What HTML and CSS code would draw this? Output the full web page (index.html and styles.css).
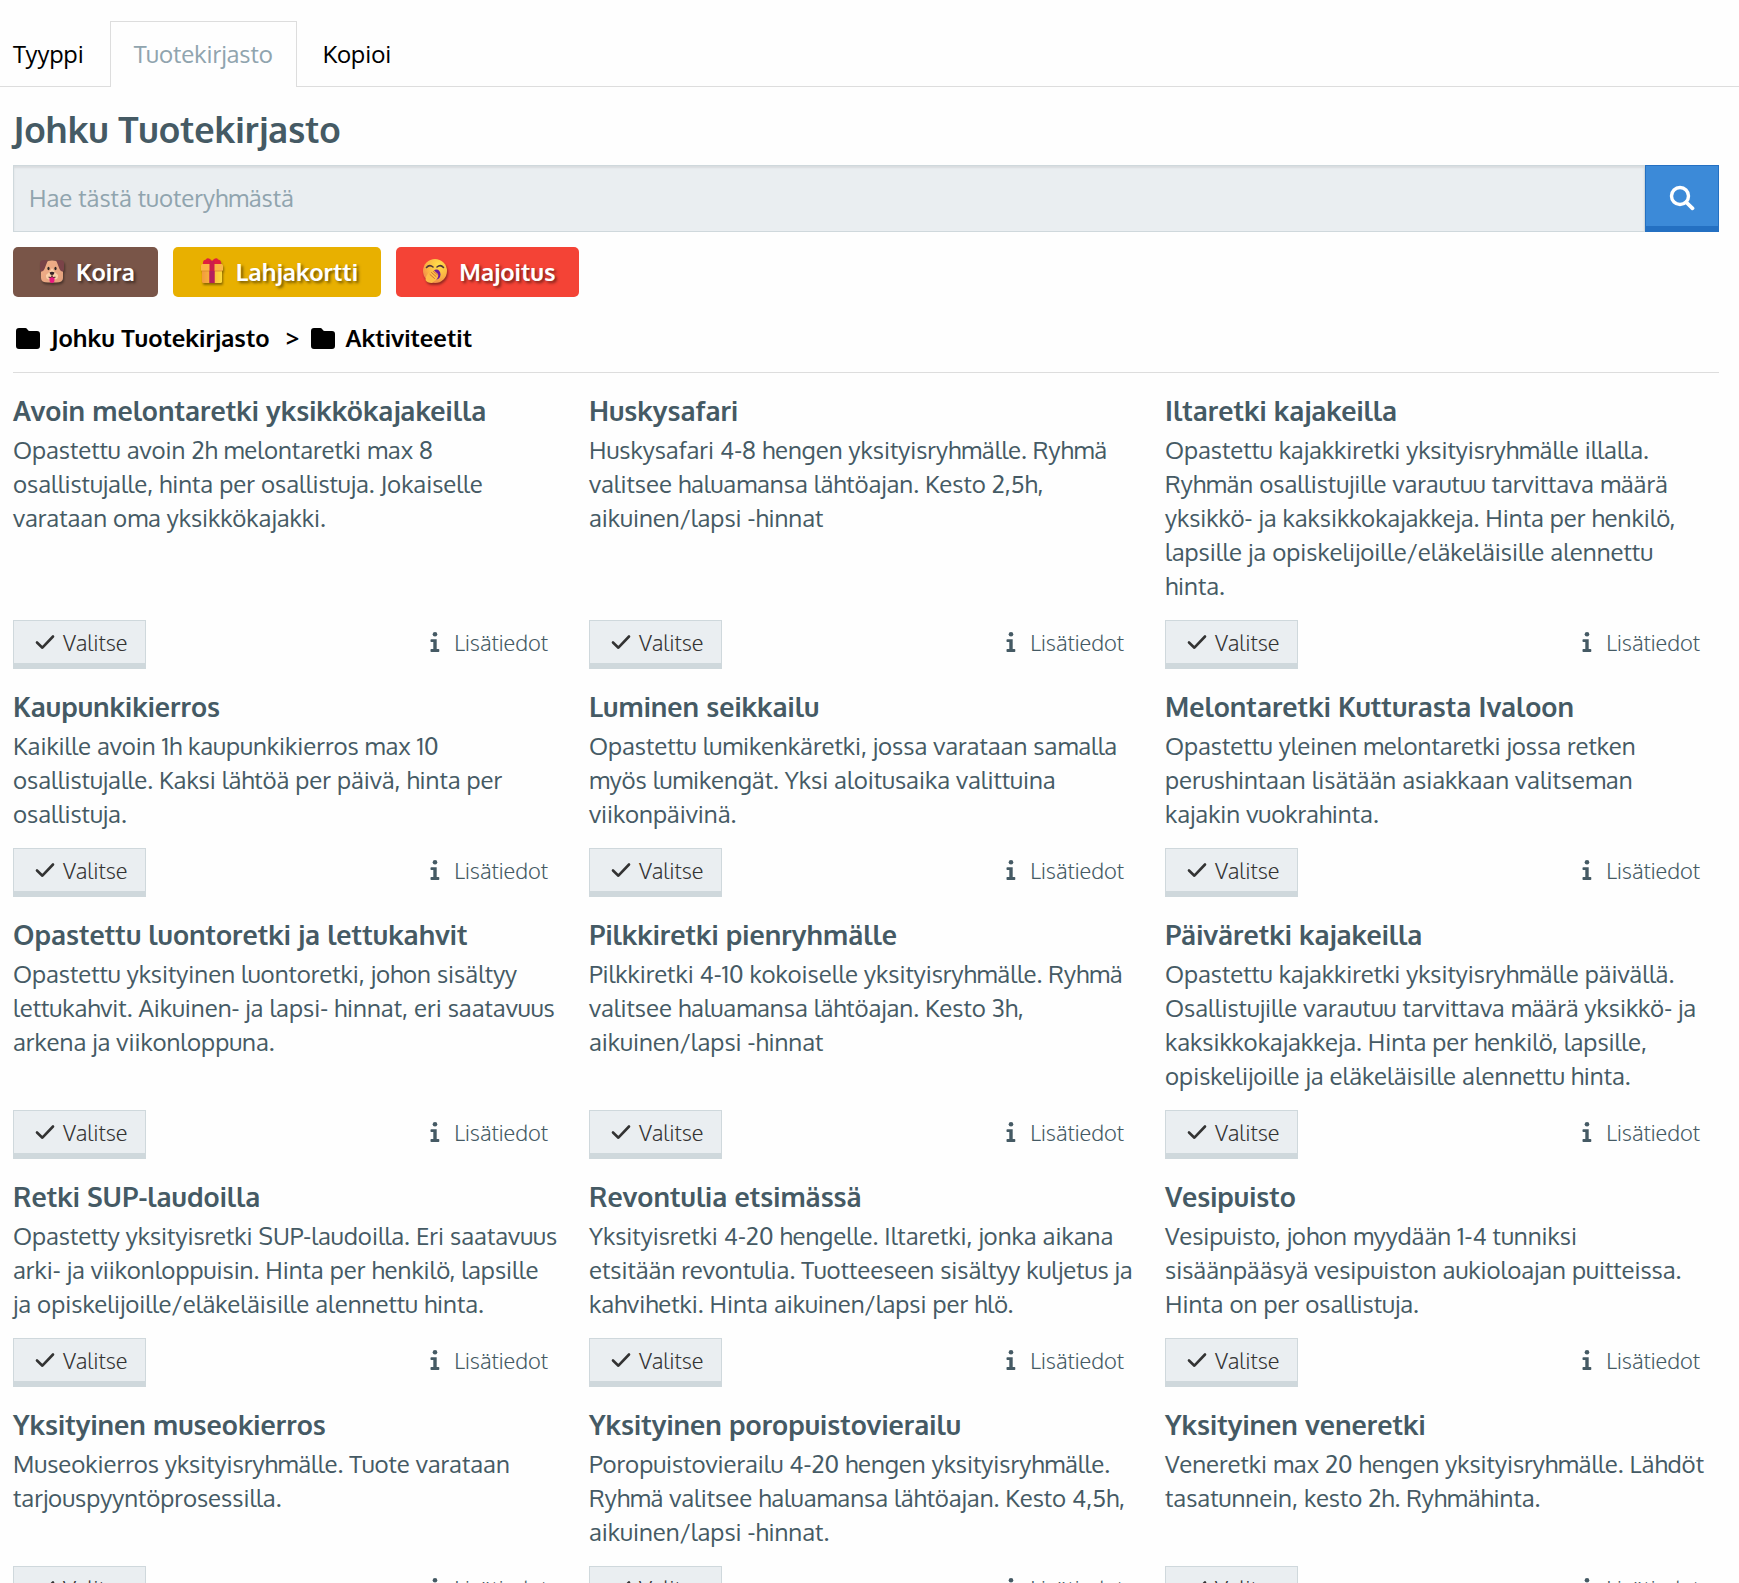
FILE: index.html
```html
<!DOCTYPE html>
<html lang="fi">
<head>
    <meta charset="UTF-8">
    <meta name="viewport" content="width=device-width, initial-scale=1.0">
    <title>Johku Tuotekirjasto</title>
    <link rel="stylesheet" href="styles.css">
</head>
<body>
    <!-- shared icons -->
    <svg class="sprite" aria-hidden="true">
        <symbol id="icon-check" viewBox="0 0 20 16">
            <path d="M2 8.5l5.4 5.2L18 2.5" fill="none" stroke="currentColor" stroke-width="2.6" stroke-linecap="round" stroke-linejoin="round"/>
        </symbol>
        <symbol id="icon-info" viewBox="0 0 10 20">
            <circle cx="5" cy="2.3" r="2.3"/>
            <path d="M1.3 7.2H6.7V17H8.5A.8.8 0 0 1 9.3 17.8V19.2A.8.8 0 0 1 8.5 20H1.3A.8.8 0 0 1 .5 19.2V17.8A.8.8 0 0 1 1.3 17H3.3V10H1.3A.8.8 0 0 1 .5 9.2V8A.8.8 0 0 1 1.3 7.2Z"/>
        </symbol>
        <symbol id="icon-folder" viewBox="0 0 24 21">
            <path d="M3 0H9.5C11.5 0 11.5 3 13.5 3H21A3 3 0 0 1 24 6V18A3 3 0 0 1 21 21H3A3 3 0 0 1 0 18V3A3 3 0 0 1 3 0Z"/>
        </symbol>
    </svg>

    <nav class="tabs">
        <a href="#" class="tab">Tyyppi</a>
        <a href="#" class="tab active">Tuotekirjasto</a>
        <a href="#" class="tab">Kopioi</a>
    </nav>

    <main class="container">
        <h1>Johku Tuotekirjasto</h1>

        <form class="search">
            <input type="text" class="search-input" placeholder="Hae tästä tuoteryhmästä" aria-label="Hae tästä tuoteryhmästä">
            <button type="submit" class="search-btn" aria-label="Hae">
                <svg width="26" height="26" viewBox="0 0 26 26" fill="none" stroke="#fff" stroke-linecap="round">
                    <circle cx="11" cy="11" r="8.5" stroke-width="3.4"/>
                    <path d="M17.5 17.5L23.5 23.3" stroke-width="3.8"/>
                </svg>
            </button>
        </form>

        <div class="tags">
            <button type="button" class="tag tag-dog">
                <svg class="emoji" viewBox="0 0 26 26">
                    <defs>
                        <linearGradient id="dogFace" x1="0" y1="0" x2="1" y2="1">
                            <stop offset="0" stop-color="#f3b08a"/>
                            <stop offset="1" stop-color="#e2a07c"/>
                        </linearGradient>
                    </defs>
                    <path d="M6 4Q13 1 20 4L24 14V20Q24 24.5 17 24.5H9Q2 24.5 2 20V14Z" fill="url(#dogFace)"/>
                    <path d="M1 5Q1 2 5 2H9Q7 7 5.500 11Q4 14 2 13.500Q1 13 1 11Z" fill="#7a4348"/>
                    <path d="M25 5Q25 2 21 2H17Q19 7 20.500 11Q22 14 24 13.500Q25 13 25 11Z" fill="#7a4348"/>
                    <path d="M13 10Q15 14 19 17Q19.5 21 16 21.5H10Q6.5 21 7 17Q11 14 13 10Z" fill="#fcd0a8"/>
                    <ellipse cx="9.5" cy="10.5" rx="1.1" ry="1.8" fill="#2f2525"/>
                    <ellipse cx="16.5" cy="10.5" rx="1.1" ry="1.8" fill="#2f2525"/>
                    <path d="M10.5 19H15.5V22Q15.5 25 13 25Q10.5 25 10.5 22Z" fill="#e8197f"/>
                    <path d="M10.5 14.5Q13 13.2 15.5 14.5Q15 17 13 17Q11 17 10.5 14.5Z" fill="#352226"/>
                    <path d="M13 16.5V18.5M9.5 19.2Q12 20 13 18.4Q14 20 16.5 19.2" fill="none" stroke="#4a2c2c" stroke-width="1"/>
                </svg>
                Koira
            </button>
            <button type="button" class="tag tag-gift">
                <svg class="emoji" viewBox="0 0 26 26">
                    <defs>
                        <linearGradient id="giftBox" x1="0" y1="0" x2="1" y2="0">
                            <stop offset="0" stop-color="#f39a3e"/>
                            <stop offset="1" stop-color="#fddb3a"/>
                        </linearGradient>
                    </defs>
                    <rect x="3" y="10" width="20" height="15" rx="1.5" fill="url(#giftBox)"/>
                    <rect x="2" y="6" width="22" height="7" rx="1.5" fill="#fcb544"/>
                    <path d="M3 13H23" stroke="#d98a2b" stroke-width=".8"/>
                    <path d="M12 6H4Q3.5 2 7 1.5Q8 -.5 11 1L13 3L15 1Q18 -.5 19 1.5Q22.5 2 22 6Z" fill="#e01f3d"/>
                    <path d="M10.5 3H15.5V25H10.5Z" fill="#cb1f4b"/>
                    <path d="M10.5 13H15.5V25H10.5Z" fill="#b3205f"/>
                </svg>
                Lahjakortti
            </button>
            <button type="button" class="tag tag-stay">
                <svg class="emoji" viewBox="0 0 26 26">
                    <defs>
                        <radialGradient id="yawnFace" cx=".65" cy=".25" r=".85">
                            <stop offset="0" stop-color="#ffe04a"/>
                            <stop offset=".6" stop-color="#fbb243"/>
                            <stop offset="1" stop-color="#ee7f4d"/>
                        </radialGradient>
                    </defs>
                    <circle cx="13" cy="13" r="12" fill="url(#yawnFace)"/>
                    <path d="M4.5 9.5Q7.5 6 11 9M15 9Q18.5 6 21.5 9.5" fill="none" stroke="#50343c" stroke-width="1.6" stroke-linecap="round"/>
                    <ellipse cx="14.5" cy="16.5" rx="4" ry="5" fill="#6d1a9c"/>
                    <path d="M5 17Q8 12.5 12 12.5L16 16Q17 19 14 22L10 25Q5 25 3.5 22Q3.5 19 5 17Z" fill="#fdbd48"/>
                    <path d="M9.5 14.5L14 18.5M8 16.5L12.5 20.5M11.5 13.5L15.5 16.8" stroke="#c96b35" stroke-width=".9" stroke-linecap="round"/>
                </svg>
                Majoitus
            </button>
        </div>

        <nav class="breadcrumb">
            <a href="#"><svg class="folder"><use href="#icon-folder"/></svg>Johku Tuotekirjasto</a>
            <span class="separator">&gt;</span>
            <a href="#"><svg class="folder"><use href="#icon-folder"/></svg>Aktiviteetit</a>
        </nav>

        <div class="products">
            <article class="product">
                <h2>Avoin melontaretki yksikkökajakeilla</h2>
                <p>Opastettu avoin 2h melontaretki max 8 osallistujalle, hinta per osallistuja. Jokaiselle varataan oma yksikkökajakki.</p>
                <div class="actions">
                    <button type="button" class="btn"><svg class="check"><use href="#icon-check"/></svg>Valitse</button>
                    <a href="#" class="info"><svg class="info-icon"><use href="#icon-info"/></svg>Lisätiedot</a>
                </div>
            </article>
            <article class="product">
                <h2>Huskysafari</h2>
                <p>Huskysafari 4-8 hengen yksityisryhmälle. Ryhmä valitsee haluamansa lähtöajan. Kesto 2,5h, aikuinen/lapsi -hinnat</p>
                <div class="actions">
                    <button type="button" class="btn"><svg class="check"><use href="#icon-check"/></svg>Valitse</button>
                    <a href="#" class="info"><svg class="info-icon"><use href="#icon-info"/></svg>Lisätiedot</a>
                </div>
            </article>
            <article class="product">
                <h2>Iltaretki kajakeilla</h2>
                <p>Opastettu kajakkiretki yksityisryhmälle illalla. Ryhmän osallistujille varautuu tarvittava määrä yksikkö- ja kaksikkokajakkeja. Hinta per henkilö, lapsille ja opiskelijoille/eläkeläisille alennettu hinta.</p>
                <div class="actions">
                    <button type="button" class="btn"><svg class="check"><use href="#icon-check"/></svg>Valitse</button>
                    <a href="#" class="info"><svg class="info-icon"><use href="#icon-info"/></svg>Lisätiedot</a>
                </div>
            </article>

            <article class="product">
                <h2>Kaupunkikierros</h2>
                <p>Kaikille avoin 1h kaupunkikierros max 10 osallistujalle. Kaksi lähtöä per päivä, hinta per osallistuja.</p>
                <div class="actions">
                    <button type="button" class="btn"><svg class="check"><use href="#icon-check"/></svg>Valitse</button>
                    <a href="#" class="info"><svg class="info-icon"><use href="#icon-info"/></svg>Lisätiedot</a>
                </div>
            </article>
            <article class="product">
                <h2>Luminen seikkailu</h2>
                <p>Opastettu lumikenkäretki, jossa varataan samalla myös lumikengät. Yksi aloitusaika valittuina viikonpäivinä.</p>
                <div class="actions">
                    <button type="button" class="btn"><svg class="check"><use href="#icon-check"/></svg>Valitse</button>
                    <a href="#" class="info"><svg class="info-icon"><use href="#icon-info"/></svg>Lisätiedot</a>
                </div>
            </article>
            <article class="product">
                <h2>Melontaretki Kutturasta Ivaloon</h2>
                <p>Opastettu yleinen melontaretki jossa retken perushintaan lisätään asiakkaan valitseman kajakin vuokrahinta.</p>
                <div class="actions">
                    <button type="button" class="btn"><svg class="check"><use href="#icon-check"/></svg>Valitse</button>
                    <a href="#" class="info"><svg class="info-icon"><use href="#icon-info"/></svg>Lisätiedot</a>
                </div>
            </article>

            <article class="product">
                <h2>Opastettu luontoretki ja lettukahvit</h2>
                <p>Opastettu yksityinen luontoretki, johon sisältyy lettukahvit. Aikuinen- ja lapsi- hinnat, eri saatavuus arkena ja viikonloppuna.</p>
                <div class="actions">
                    <button type="button" class="btn"><svg class="check"><use href="#icon-check"/></svg>Valitse</button>
                    <a href="#" class="info"><svg class="info-icon"><use href="#icon-info"/></svg>Lisätiedot</a>
                </div>
            </article>
            <article class="product">
                <h2>Pilkkiretki pienryhmälle</h2>
                <p>Pilkkiretki 4-10 kokoiselle yksityisryhmälle. Ryhmä valitsee haluamansa lähtöajan. Kesto 3h, aikuinen/lapsi -hinnat</p>
                <div class="actions">
                    <button type="button" class="btn"><svg class="check"><use href="#icon-check"/></svg>Valitse</button>
                    <a href="#" class="info"><svg class="info-icon"><use href="#icon-info"/></svg>Lisätiedot</a>
                </div>
            </article>
            <article class="product">
                <h2>Päiväretki kajakeilla</h2>
                <p>Opastettu kajakkiretki yksityisryhmälle päivällä. Osallistujille varautuu tarvittava määrä yksikkö- ja kaksikkokajakkeja. Hinta per henkilö, lapsille, opiskelijoille ja eläkeläisille alennettu hinta.</p>
                <div class="actions">
                    <button type="button" class="btn"><svg class="check"><use href="#icon-check"/></svg>Valitse</button>
                    <a href="#" class="info"><svg class="info-icon"><use href="#icon-info"/></svg>Lisätiedot</a>
                </div>
            </article>

            <article class="product">
                <h2>Retki SUP-laudoilla</h2>
                <p>Opastetty yksityisretki SUP-laudoilla. Eri saatavuus arki- ja viikonloppuisin. Hinta per henkilö, lapsille ja opiskelijoille/eläkeläisille alennettu hinta.</p>
                <div class="actions">
                    <button type="button" class="btn"><svg class="check"><use href="#icon-check"/></svg>Valitse</button>
                    <a href="#" class="info"><svg class="info-icon"><use href="#icon-info"/></svg>Lisätiedot</a>
                </div>
            </article>
            <article class="product">
                <h2>Revontulia etsimässä</h2>
                <p>Yksityisretki 4-20 hengelle. Iltaretki, jonka aikana etsitään revontulia. Tuotteeseen sisältyy kuljetus ja kahvihetki. Hinta aikuinen/lapsi per hlö.</p>
                <div class="actions">
                    <button type="button" class="btn"><svg class="check"><use href="#icon-check"/></svg>Valitse</button>
                    <a href="#" class="info"><svg class="info-icon"><use href="#icon-info"/></svg>Lisätiedot</a>
                </div>
            </article>
            <article class="product">
                <h2>Vesipuisto</h2>
                <p>Vesipuisto, johon myydään 1-4 tunniksi sisäänpääsyä vesipuiston aukioloajan puitteissa. Hinta on per osallistuja.</p>
                <div class="actions">
                    <button type="button" class="btn"><svg class="check"><use href="#icon-check"/></svg>Valitse</button>
                    <a href="#" class="info"><svg class="info-icon"><use href="#icon-info"/></svg>Lisätiedot</a>
                </div>
            </article>

            <article class="product">
                <h2>Yksityinen museokierros</h2>
                <p>Museokierros yksityisryhmälle. Tuote varataan tarjouspyyntöprosessilla.</p>
                <div class="actions">
                    <button type="button" class="btn"><svg class="check"><use href="#icon-check"/></svg>Valitse</button>
                    <a href="#" class="info"><svg class="info-icon"><use href="#icon-info"/></svg>Lisätiedot</a>
                </div>
            </article>
            <article class="product">
                <h2>Yksityinen poropuistovierailu</h2>
                <p>Poropuistovierailu 4-20 hengen yksityisryhmälle. Ryhmä valitsee haluamansa lähtöajan. Kesto 4,5h, aikuinen/lapsi -hinnat.</p>
                <div class="actions">
                    <button type="button" class="btn"><svg class="check"><use href="#icon-check"/></svg>Valitse</button>
                    <a href="#" class="info"><svg class="info-icon"><use href="#icon-info"/></svg>Lisätiedot</a>
                </div>
            </article>
            <article class="product">
                <h2>Yksityinen veneretki</h2>
                <p>Veneretki max 20 hengen yksityisryhmälle. Lähdöt tasatunnein, kesto 2h. Ryhmähinta.</p>
                <div class="actions">
                    <button type="button" class="btn"><svg class="check"><use href="#icon-check"/></svg>Valitse</button>
                    <a href="#" class="info"><svg class="info-icon"><use href="#icon-info"/></svg>Lisätiedot</a>
                </div>
            </article>
        </div>
    </main>
</body>
</html>
```
FILE: styles.css
```css
* {
    box-sizing: border-box;
}

body {
    margin: 0;
    background: #fefefe;
    color: #455a64;
    font-family: Oxygen, "Noto Sans", "Open Sans", sans-serif;
    font-size: 24px;
    line-height: 34px;
}

a {
    color: inherit;
    text-decoration: none;
}

button, input {
    font-family: inherit;
    margin: 0;
}

svg {
    flex: none;
}

.sprite {
    display: none;
}

/* Tabs */
.tabs {
    display: flex;
    padding-top: 21px;
    border-bottom: 1px solid #ddd;
}

.tab {
    padding: 15px 25px;
    border: 1px solid transparent;
    border-bottom: 0;
    color: #000;
}

.tab:first-child {
    padding-left: 12px;
}

.tab.active {
    margin-bottom: -1px;
    padding: 15px 23px 16px;
    border-color: #ddd;
    background: #fefefe;
    color: #90a4ae;
}

.container {
    padding: 17px 20px 20px 13px;
}

h1 {
    margin: 0 0 11px;
    font-size: 36px;
    font-weight: 600;
    line-height: 50px;
}

/* Search */
.search {
    display: flex;
    height: 67px;
}

.search-input {
    flex: 1;
    min-width: 0;
    padding: 0 15px 2px;
    border: 1px solid #cfd8dc;
    border-radius: 0;
    background: #eaeef1;
    box-shadow: inset 0 2px 2px rgba(0, 0, 0, 0.08);
    color: #455a64;
    font-size: 24px;
}

.search-input::placeholder {
    color: #90a4ae;
}

.search-btn {
    display: flex;
    align-items: center;
    justify-content: center;
    width: 74px;
    padding: 3px 0 0;
    border: 1px solid #2470c2;
    border-bottom-width: 6px;
    background: #3c8ad8;
    cursor: pointer;
}

/* Category tags */
.tags {
    display: flex;
    gap: 15px;
    margin-top: 15px;
}

.tag {
    display: flex;
    align-items: center;
    gap: 11px;
    height: 50px;
    padding: 0 23px 2px 26px;
    border: 0;
    border-radius: 5px;
    color: #fff;
    font-size: 24px;
    font-weight: 700;
    text-shadow: 2px 2px 3px rgba(0, 0, 0, 0.5);
    cursor: pointer;
}

.tag-dog {
    background: #795548;
}

.tag-gift {
    background: #e8b000;
}

.tag-stay {
    background: #f44336;
}

.emoji {
    width: 26px;
    height: 26px;
    filter: drop-shadow(1px 2px 1px rgba(0, 0, 0, 0.4));
}

/* Breadcrumb */
.breadcrumb {
    display: flex;
    align-items: center;
    padding: 24px 3px 17px;
    border-bottom: 1px solid #ddd;
    color: #000;
    font-weight: 600;
}

.breadcrumb a {
    display: flex;
    align-items: center;
    gap: 11px;
}

.folder {
    width: 24px;
    height: 21px;
}

.separator {
    margin: 0 11px 0 16px;
}

/* Products */
.products {
    display: grid;
    grid-template-columns: repeat(3, 1fr);
    gap: 20px 22px;
    padding-top: 20px;
}

.product {
    display: flex;
    flex-direction: column;
}

.product h2 {
    margin: 0 0 6px;
    font-size: 27px;
    font-weight: 600;
    line-height: 34px;
}

.product p {
    margin: 0 0 17px;
    padding-right: 8px;
}

.actions {
    display: flex;
    align-items: center;
    justify-content: space-between;
    margin-top: auto;
    padding-right: 19px;
}

.btn {
    display: flex;
    align-items: center;
    gap: 8px;
    height: 49px;
    padding: 0 17px 0 21px;
    border: 1px solid #cfd8dc;
    border-bottom-width: 6px;
    background: #eaeef1;
    color: #333;
    font-size: 22px;
    font-weight: 300;
    cursor: pointer;
}

.check {
    width: 20px;
    height: 16px;
}

.info {
    display: flex;
    align-items: center;
    gap: 14px;
    padding-bottom: 6px;
    font-size: 22px;
    font-weight: 300;
}

.info-icon {
    width: 10px;
    height: 20px;
    fill: currentColor;
}
```
